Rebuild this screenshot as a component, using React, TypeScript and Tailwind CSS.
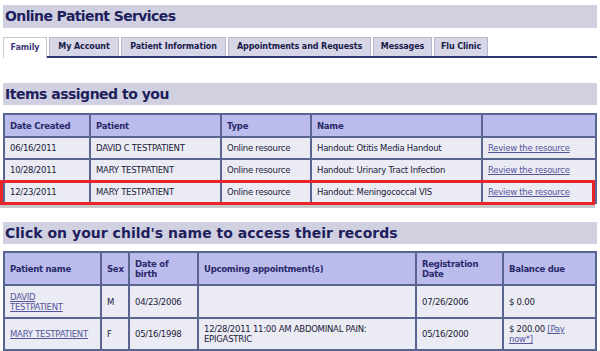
import type { JSX } from "react";

const font = { fontFamily: '"DejaVu Sans", Verdana, sans-serif' };

const tabs = [
  { label: "Family", w: "w-[44px]" },
  { label: "My Account", w: "w-[70px]" },
  { label: "Patient Information", w: "w-[105px]" },
  { label: "Appointments and Requests", w: "w-[143px]" },
  { label: "Messages", w: "w-[59px]" },
  { label: "Flu Clinic", w: "w-[54px]" },
];

const items = [
  ["06/16/2011", "DAVID C TESTPATIENT", "Online resource", "Handout: Otitis Media Handout"],
  ["10/28/2011", "MARY TESTPATIENT", "Online resource", "Handout: Urinary Tract Infection"],
  ["12/23/2011", "MARY TESTPATIENT", "Online resource", "Handout: Meningococcal VIS"],
];

const th =
  "border-2 border-[#5a6490] bg-[#bcbcec] px-[5px] text-left align-middle text-[8.5px] leading-[10px] font-bold tracking-[-0.25px] text-[#28286a]";
const td =
  "border-2 border-[#5a6490] bg-[#ebebf3] px-[5px] align-middle text-[8.5px] leading-[10px] tracking-[-0.25px] text-[#1a1a3a]";
const link = "text-[#55559c] underline";

export default function App(): JSX.Element {
  return (
    <div className="w-[600px] bg-white px-[3px] pt-[5px]" style={font}>
      <div className="flex h-[23px] items-center bg-[#d0d0e1] px-[2px] text-[14px] font-bold tracking-[-0.6px] text-[#1e1e5c]">
        Online Patient Services
      </div>

      <div className="mt-[9px] flex gap-[2px] border-b-2 border-[#2e3470]">
        {tabs.map((t, i) => (
          <div
            key={t.label}
            className={
              i === 0
                ? `${t.w} -mb-[2px] flex h-[21px] items-center justify-center border border-b-0 border-[#c8c8d8] bg-white text-[8px] font-bold tracking-[-0.1px] text-[#3a3a7a]`
                : `${t.w} flex h-[19px] items-center justify-center border border-b-0 border-[#b8b8cc] bg-[#d6d6e6] text-[8px] font-bold tracking-[-0.1px] text-[#1a1a4a]`
            }
          >
            {t.label}
          </div>
        ))}
      </div>

      <h2 className="mt-[25px] flex h-[22px] items-center bg-[#d0d0e1] px-[2px] text-[14px] font-bold tracking-[-0.5px] text-[#1e1e5c]">
        Items assigned to you
      </h2>

      <div className="relative mt-[8px]">
        <table className="w-full table-fixed border-collapse">
          <colgroup>
            <col className="w-[86px]" />
            <col className="w-[131px]" />
            <col className="w-[90px]" />
            <col className="w-[171px]" />
            <col />
          </colgroup>
          <thead>
            <tr className="h-[23px]">
              <th className={th}>Date Created</th>
              <th className={th}>Patient</th>
              <th className={th}>Type</th>
              <th className={th}>Name</th>
              <th className={th}></th>
            </tr>
          </thead>
          <tbody>
            {items.map((r) => (
              <tr key={r[0]} className="h-[22px]">
                {r.map((c, i) => (
                  <td key={i} className={td}>
                    {c}
                  </td>
                ))}
                <td className={td}>
                  <a href="#" className={link}>
                    Review the resource
                  </a>
                </td>
              </tr>
            ))}
          </tbody>
        </table>
        <div className="pointer-events-none absolute left-[-3px] top-[67px] h-[25px] w-[595px] border-[3px] border-[#e8232a] shadow-[0_3px_0_#c8c8c8]" />
      </div>

      <h2 className="mt-[18px] flex h-[22px] items-center bg-[#d0d0e1] px-[2px] text-[14px] font-bold tracking-[0.02px] text-[#1e1e5c]">
        Click on your child's name to access their records
      </h2>

      <table className="mt-[7px] w-full table-fixed border-collapse">
        <colgroup>
          <col className="w-[97px]" />
          <col className="w-[28px]" />
          <col className="w-[69px]" />
          <col className="w-[218px]" />
          <col className="w-[87px]" />
          <col />
        </colgroup>
        <thead>
          <tr className="h-[33px]">
            <th className={th}>Patient name</th>
            <th className={th}>Sex</th>
            <th className={th}>
              Date of
              <br />
              birth
            </th>
            <th className={th}>Upcoming appointment(s)</th>
            <th className={th}>
              Registration
              <br />
              Date
            </th>
            <th className={th}>Balance due</th>
          </tr>
        </thead>
        <tbody>
          <tr className="h-[33px]">
            <td className={td}>
              <a href="#" className={link}>
                DAVID
                <br />
                TESTPATIENT
              </a>
            </td>
            <td className={td}>M</td>
            <td className={td}>04/23/2006</td>
            <td className={td}></td>
            <td className={td}>07/26/2006</td>
            <td className={td}>$ 0.00</td>
          </tr>
          <tr className="h-[32px]">
            <td className={`${td} whitespace-nowrap`}>
              <a href="#" className={link}>
                MARY TESTPATIENT
              </a>
            </td>
            <td className={td}>F</td>
            <td className={td}>05/16/1998</td>
            <td className={td}>
              12/28/2011 11:00 AM ABDOMINAL PAIN:
              <br />
              EPIGASTRIC
            </td>
            <td className={td}>05/16/2000</td>
            <td className={td}>
              $ 200.00{" "}
              <a href="#" className={link}>
                [Pay
                <br />
                now*]
              </a>
            </td>
          </tr>
        </tbody>
      </table>
    </div>
  );
}
